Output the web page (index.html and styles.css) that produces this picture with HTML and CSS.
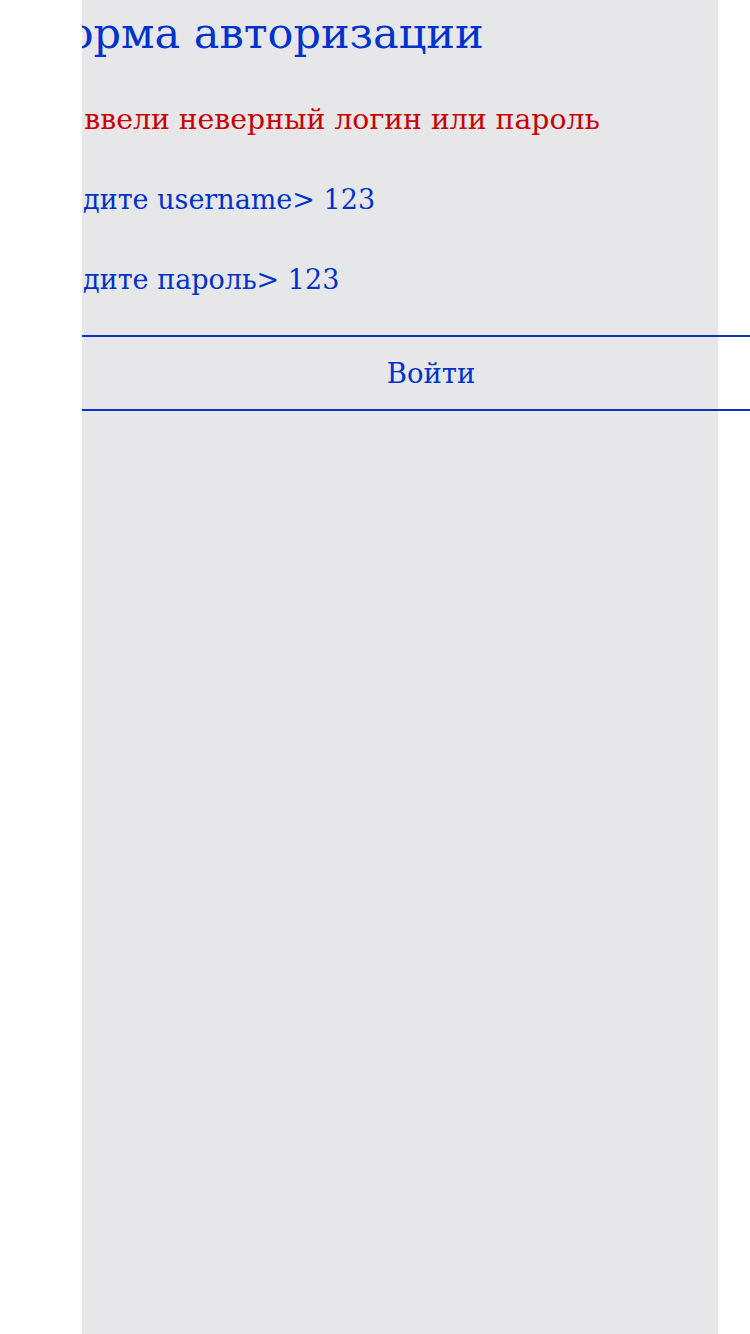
FILE: index.html
```html
<!DOCTYPE html>
<html lang="ru">
<head>
<meta charset="utf-8">
<link rel="stylesheet" href="styles.css">
</head>
<body>
<div class="clip">
  <div class="panel">
    <form class="form">
      <h1 class="title">Форма авторизации</h1>
      <p class="error">Вы ввели неверный логин или пароль</p>
      <p class="field">Введите username&gt; 123</p>
      <p class="field">Введите пароль&gt; 123</p>
      <button class="submit" type="button">Войти</button>
    </form>
  </div>
</div>
</body>
</html>
```
FILE: styles.css
```css
html, body {
  margin: 0;
  padding: 0;
  background: #ffffff;
}
.clip {
  margin-left: 82px;
  width: 668px;
  height: 1334px;
  overflow: hidden;
}
.panel {
  width: 636px;
  height: 1334px;
  background: #e7e7ea;
}
.form {
  margin-left: -50px;
  width: 798px;
  display: flex;
  flex-direction: column;
  font-family: "DejaVu Serif", serif;
}
.title {
  margin: 0;
  padding-top: 8px;
  font-family: "DejaVu Serif", serif;
  font-size: 43px;
  font-weight: normal;
  line-height: 50px;
  color: #0033cc;
}
.error {
  margin: 42px 0 0;
  font-family: "DejaVu Serif", serif;
  font-size: 28.3px;
  line-height: 40px;
  color: #cc0000;
}
.field {
  margin: 40px 0 0;
  font-family: "DejaVu Serif", serif;
  font-size: 27px;
  line-height: 40px;
  color: #0033cc;
}
.submit {
  margin-top: 35px;
  height: 76px;
  background: transparent;
  border: none;
  border-top: 2px solid #0033cc;
  border-bottom: 2px solid #0033cc;
  font-family: "DejaVu Serif", serif;
  font-size: 27.5px;
  color: #0033cc;
  padding: 0;
}
```
